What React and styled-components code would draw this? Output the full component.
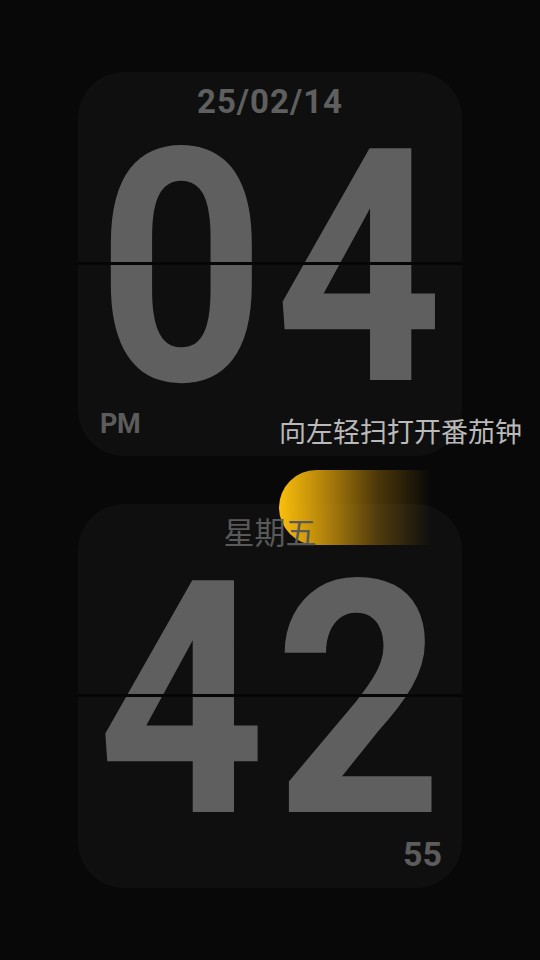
import React from "react";
import styled, { createGlobalStyle } from "styled-components";

const GlobalStyle = createGlobalStyle`
  html, body {
    margin: 0;
    padding: 0;
    background: #080808;
  }
  body {
    font-family: Roboto, "Noto Sans CJK SC", sans-serif;
  }
`;

const Screen = styled.div`
  position: relative;
  min-height: 100vh;
  display: flex;
  flex-direction: column;
  align-items: center;
  justify-content: center;
  gap: 48px;
  overflow: hidden;
`;

const Card = styled.div`
  position: relative;
  width: 384px;
  height: 384px;
  border-radius: 46px;
  background: #0f0f0f;
  display: grid;
  grid-template-columns: minmax(0, 1fr);
  grid-template-rows: 64px minmax(0, 1fr) 64px;

  &::after {
    content: "";
    position: absolute;
    left: 0;
    right: 0;
    top: 190px;
    height: 3px;
    background: #060606;
  }
`;

const TopRow = styled.div`
  display: flex;
  justify-content: center;
  align-items: flex-start;
  padding-top: ${(p) => p.$pad}px;
`;

const BottomRow = styled.div`
  display: flex;
  align-items: flex-end;
  justify-content: ${(p) => (p.$right ? "flex-end" : "flex-start")};
  padding: 0 ${(p) => (p.$right ? 20 : 0)}px ${(p) => p.$pad}px
    ${(p) => (p.$right ? 0 : 22)}px;
`;

const DateLabel = styled.div`
  font-family: Roboto, sans-serif;
  font-weight: 700;
  font-size: 33px;
  line-height: 1;
  color: #5f5f5f;
  letter-spacing: 1px;
`;

const Weekday = styled.div`
  position: relative;
  z-index: 2;
  font-family: "Noto Sans CJK SC", sans-serif;
  font-size: 31px;
  line-height: 1;
  color: #595959;
`;

const Digits = styled.div`
  display: flex;
  align-items: center;
  justify-content: center;
  gap: 10px;
  transform: scaleX(0.9) translateY(5px);
`;

const Digit = styled.span`
  font-family: Roboto, sans-serif;
  font-weight: 700;
  font-size: 326px;
  line-height: 256px;
  color: #5f5f5f;
`;

const Corner = styled.div`
  font-family: Roboto, sans-serif;
  font-weight: 700;
  font-size: ${(p) => p.$size}px;
  line-height: 1;
  color: #5c5c5c;
  letter-spacing: ${(p) => p.$spacing || 0}px;
`;

const Hint = styled.div`
  position: absolute;
  right: 18px;
  top: 417px;
  z-index: 1;
  font-family: "Noto Sans CJK SC", sans-serif;
  font-size: 27px;
  line-height: 1;
  color: #bababa;
`;

const SwipePill = styled.div`
  position: absolute;
  left: 279px;
  top: 470px;
  width: 152px;
  height: 75px;
  z-index: 1;
  border-radius: 38px 0 0 38px;
  background: linear-gradient(
    90deg,
    #fbbf0b 0%,
    rgba(234, 170, 10, 0.75) 30%,
    rgba(200, 140, 10, 0.35) 65%,
    rgba(180, 120, 10, 0) 100%
  );
`;

const FlipCard = ({ top, value, corner }) => (
  <Card>
    {top}
    <Digits>
      {value.split("").map((d, i) => (
        <Digit key={i}>{d}</Digit>
      ))}
    </Digits>
    {corner}
  </Card>
);

export default function App() {
  return (
    <>
      <GlobalStyle />
      <Screen>
        <FlipCard
          value="04"
          top={
            <TopRow $pad={13}>
              <DateLabel>25/02/14</DateLabel>
            </TopRow>
          }
          corner={
            <BottomRow $pad={18}>
              <Corner $size={27} $spacing={-0.5}>
                PM
              </Corner>
            </BottomRow>
          }
        />

        <FlipCard
          value="42"
          top={
            <TopRow $pad={11}>
              <Weekday>星期五</Weekday>
            </TopRow>
          }
          corner={
            <BottomRow $right $pad={17}>
              <Corner $size={34}>55</Corner>
            </BottomRow>
          }
        />

        <Hint>向左轻扫打开番茄钟</Hint>
        <SwipePill />
      </Screen>
    </>
  );
}
